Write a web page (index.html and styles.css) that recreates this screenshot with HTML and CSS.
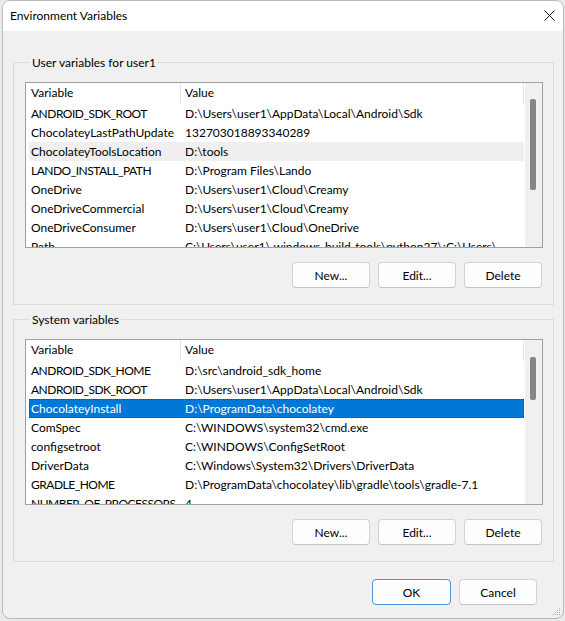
FILE: index.html
```html
<!DOCTYPE html>
<html lang="en">
<head>
<meta charset="utf-8">
<title>Environment Variables</title>
<link rel="stylesheet" href="styles.css">
</head>
<body>
<div class="window">
  <div class="titlebar">
    <span class="title">Environment Variables</span>
    <span class="close" aria-label="Close">
      <svg width="11" height="11" viewBox="0 0 11 11"><path d="M0.5 0.5 L10.5 10.5 M10.5 0.5 L0.5 10.5" stroke="#1b1b1b" stroke-width="1" fill="none"/></svg>
    </span>
  </div>
  <div class="content">
    <section class="group">
      <div class="group-label">User variables for user1</div>
      <div class="list">
        <div class="list-main">
          <div class="header"><div class="h1">Variable</div><div class="h2">Value</div></div>
          <div class="row"><span class="c1 caps">ANDROID_SDK_ROOT</span><span class="c2">D:\Users\user1\AppData\Local\Android\Sdk</span></div>
          <div class="row"><span class="c1">ChocolateyLastPathUpdate</span><span class="c2">132703018893340289</span></div>
          <div class="row hover"><span class="c1">ChocolateyToolsLocation</span><span class="c2">D:\tools</span></div>
          <div class="row"><span class="c1 caps">LANDO_INSTALL_PATH</span><span class="c2">D:\Program Files\Lando</span></div>
          <div class="row"><span class="c1">OneDrive</span><span class="c2">D:\Users\user1\Cloud\Creamy</span></div>
          <div class="row"><span class="c1">OneDriveCommercial</span><span class="c2">D:\Users\user1\Cloud\Creamy</span></div>
          <div class="row"><span class="c1">OneDriveConsumer</span><span class="c2">D:\Users\user1\Cloud\OneDrive</span></div>
          <div class="row"><span class="c1">Path</span><span class="c2">C:\Users\user1\.windows-build-tools\python27\;C:\Users\...</span></div>
        </div>
        <div class="scrollbar"><div class="thumb" style="margin-top:16px;height:91px"></div></div>
      </div>
      <div class="buttons">
        <button class="btn">New...</button>
        <button class="btn">Edit...</button>
        <button class="btn">Delete</button>
      </div>
    </section>

    <section class="group group-system">
      <div class="group-label">System variables</div>
      <div class="list">
        <div class="list-main">
          <div class="header"><div class="h1">Variable</div><div class="h2">Value</div></div>
          <div class="row"><span class="c1 caps">ANDROID_SDK_HOME</span><span class="c2">D:\src\android_sdk_home</span></div>
          <div class="row"><span class="c1 caps">ANDROID_SDK_ROOT</span><span class="c2">D:\Users\user1\AppData\Local\Android\Sdk</span></div>
          <div class="row selected"><span class="c1">ChocolateyInstall</span><span class="c2">D:\ProgramData\chocolatey</span></div>
          <div class="row"><span class="c1">ComSpec</span><span class="c2">C:\WINDOWS\system32\cmd.exe</span></div>
          <div class="row"><span class="c1">configsetroot</span><span class="c2">C:\WINDOWS\ConfigSetRoot</span></div>
          <div class="row"><span class="c1">DriverData</span><span class="c2">C:\Windows\System32\Drivers\DriverData</span></div>
          <div class="row"><span class="c1 caps">GRADLE_HOME</span><span class="c2">D:\ProgramData\chocolatey\lib\gradle\tools\gradle-7.1</span></div>
          <div class="row"><span class="c1 caps">NUMBER_OF_PROCESSORS</span><span class="c2">4</span></div>
        </div>
        <div class="scrollbar"><div class="thumb" style="margin-top:17px;height:43px"></div></div>
      </div>
      <div class="buttons">
        <button class="btn">New...</button>
        <button class="btn">Edit...</button>
        <button class="btn">Delete</button>
      </div>
    </section>

    <div class="dialog-buttons">
      <button class="btn btn-default">OK</button>
      <button class="btn">Cancel</button>
    </div>
  </div>
  <svg class="grip" width="8" height="8" viewBox="0 0 8 8">
    <rect x="6" y="0" width="1" height="1" fill="#b0b0b0"/>
    <rect x="4" y="2" width="1" height="1" fill="#b0b0b0"/><rect x="6" y="2" width="1" height="1" fill="#b0b0b0"/>
    <rect x="2" y="4" width="1" height="1" fill="#b0b0b0"/><rect x="4" y="4" width="1" height="1" fill="#b0b0b0"/><rect x="6" y="4" width="1" height="1" fill="#b0b0b0"/>
    <rect x="0" y="6" width="1" height="1" fill="#b0b0b0"/><rect x="2" y="6" width="1" height="1" fill="#b0b0b0"/><rect x="4" y="6" width="1" height="1" fill="#b0b0b0"/><rect x="6" y="6" width="1" height="1" fill="#b0b0b0"/>
  </svg>
</div>
</body>
</html>
```

FILE: styles.css
```css
* { box-sizing: border-box; }

html, body {
  margin: 0;
  padding: 0;
}

body {
  background: #e9e9e9;
  font-family: "Segoe UI", Lato, "Liberation Sans", sans-serif;
  font-size: 12px;
  color: #000;
  width: 565px;
  height: 621px;
  overflow: hidden;
}

.window {
  position: relative;
  margin-left: 2px;
  width: 562px;
  height: 619px;
  background: #f0f0f0;
  border: 1px solid #b9b9b9;
  border-radius: 8px;
  overflow: hidden;
}

.titlebar {
  height: 30px;
  background: #ffffff;
  display: flex;
  align-items: center;
  justify-content: space-between;
  padding: 0 8px 0 7px;
}

.title {
  font-size: 12px;
  line-height: 30px;
  color: #000;
}

.close {
  display: flex;
  width: 11px;
  height: 11px;
  margin-top: -1px;
}

.content {
  padding: 31px 9px 0 10px;
}

.group {
  border: 1px solid #dcdcdc;
  padding: 0 10px 16px 11px;
}

.group-system {
  margin-top: 14px;
}

.group-label {
  width: fit-content;
  height: 16px;
  line-height: 16px;
  margin: -8px 0 0 5px;
  padding: 0 2px;
  background: #f0f0f0;
  color: #000;
}

.list {
  margin-top: 11px;
  height: 166px;
  border: 1px solid #a0a0a0;
  background: #fff;
  display: flex;
}

.list-main {
  flex: 1;
  min-width: 0;
  overflow: hidden;
}

.header {
  display: flex;
  height: 21px;
  line-height: 20px;
}

.h1 {
  width: 155px;
  padding-left: 5px;
  border-right: 1px solid #e5e5e5;
}

.h2 {
  flex: 1;
  padding-left: 4px;
  border-right: 1px solid #e5e5e5;
  margin-right: 1px;
}

.row {
  display: flex;
  height: 19px;
  line-height: 19px;
  margin: 0 1px 0 3px;
  white-space: nowrap;
}

.row.hover {
  background: #efefef;
}

.row.selected {
  background: #0078d7;
  color: #fff;
  outline: 1px dotted rgba(0, 0, 0, 0.35);
  outline-offset: -1px;
}

.c1 {
  width: 156px;
  flex: none;
  padding-left: 2px;
  overflow: hidden;
}

.c1.caps {
  letter-spacing: -0.5px;
}

.c2 {
  flex: 1;
  min-width: 0;
  overflow: hidden;
}

.scrollbar {
  width: 17px;
  flex: none;
  background: #f0f0f0;
  padding-left: 5px;
}

.thumb {
  width: 6px;
  background: #868686;
  border-radius: 2px;
}

.buttons {
  margin-top: 14px;
  display: flex;
  justify-content: flex-end;
  gap: 8px;
  padding-right: 1px;
}

.btn {
  width: 78px;
  height: 26px;
  font-family: inherit;
  font-size: 12px;
  color: #000;
  background: #fdfdfd;
  border: 1px solid #d3d3d3;
  border-bottom-color: #c4c4c4;
  border-radius: 4px;
  padding: 0;
}

.dialog-buttons {
  margin-top: 17px;
  display: flex;
  justify-content: flex-end;
  gap: 8px;
  padding-right: 17px;
}

.btn-default {
  width: 79px;
  border-color: #4f94d8;
}

.grip {
  position: absolute;
  right: 2px;
  bottom: 2px;
}
```
